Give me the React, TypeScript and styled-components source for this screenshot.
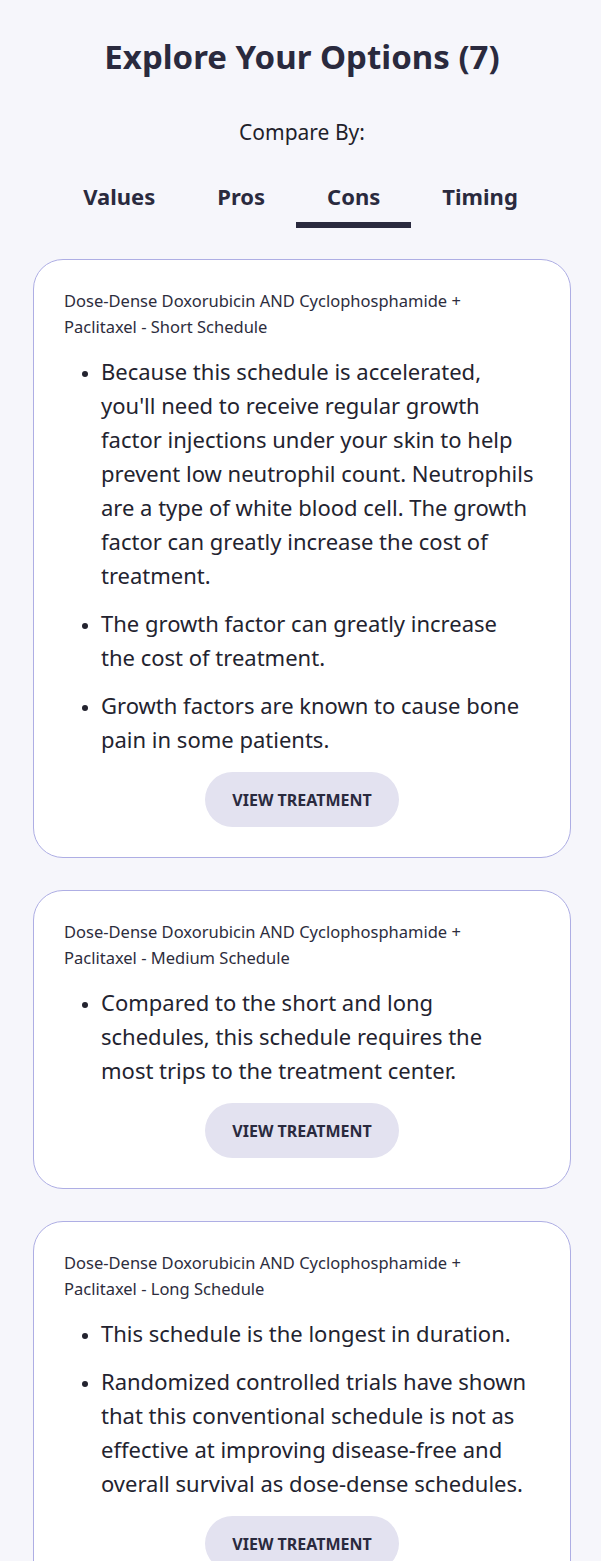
import React, { useState } from 'react'
import styled, { createGlobalStyle } from 'styled-components'

const GlobalStyle = createGlobalStyle`
  html, body {
    margin: 0;
    padding: 0;
    background: #f6f6fb;
  }
  body {
    font-family: "Noto Sans", "Open Sans", sans-serif;
    color: #26263a;
  }
`

type Option = {
  name: string
  cons: string[]
}

const options: Option[] = [
  {
    name: 'Dose-Dense Doxorubicin AND Cyclophosphamide + Paclitaxel - Short Schedule',
    cons: [
      "Because this schedule is accelerated, you'll need to receive regular growth factor injections under your skin to help prevent low neutrophil count. Neutrophils are a type of white blood cell. The growth factor can greatly increase the cost of treatment.",
      'The growth factor can greatly increase the cost of treatment.',
      'Growth factors are known to cause bone pain in some patients.',
    ],
  },
  {
    name: 'Dose-Dense Doxorubicin AND Cyclophosphamide + Paclitaxel - Medium Schedule',
    cons: [
      'Compared to the short and long schedules, this schedule requires the most trips to the treatment center.',
    ],
  },
  {
    name: 'Dose-Dense Doxorubicin AND Cyclophosphamide + Paclitaxel - Long Schedule',
    cons: [
      'This schedule is the longest in duration.',
      'Randomized controlled trials have shown that this conventional schedule is not as effective at improving disease-free and overall survival as dose-dense schedules.',
    ],
  },
]

const tabs = ['Values', 'Pros', 'Cons', 'Timing']

export default function App() {
  const [active, setActive] = useState('Cons')
  return (
    <Page>
      <GlobalStyle />
      <Heading>Explore Your Options (7)</Heading>
      <CompareLabel>Compare By:</CompareLabel>
      <TabBar>
        {tabs.map((t) => (
          <Tab key={t} $active={t === active} onClick={() => setActive(t)}>
            {t}
          </Tab>
        ))}
      </TabBar>
      <CardList>
        {options.map((o) => (
          <Card key={o.name}>
            <CardTitle>{o.name}</CardTitle>
            <BulletList>
              {o.cons.map((c) => (
                <li key={c}>{c}</li>
              ))}
            </BulletList>
            <ButtonRow>
              <ViewButton>View Treatment</ViewButton>
            </ButtonRow>
          </Card>
        ))}
      </CardList>
    </Page>
  )
}

const Page = styled.div`
  width: 601px;
  box-sizing: border-box;
  padding: 34px 30px 40px 33px;
  background: #f6f6fb;
`

const Heading = styled.h1`
  margin: 0;
  text-align: center;
  font-size: 33px;
  line-height: 46px;
  font-weight: 700;
  color: #2a2a3e;
`

const CompareLabel = styled.div`
  margin-top: 37px;
  text-align: center;
  font-size: 21px;
  line-height: 30px;
  color: #1f1f2b;
`

const TabBar = styled.div`
  display: flex;
  justify-content: center;
  margin-top: 34px;
  padding-right: 3px;
`

const Tab = styled.button<{ $active: boolean }>`
  background: none;
  border: none;
  padding: 0 31px 11px 31px;
  font-family: inherit;
  font-size: 22px;
  line-height: 30px;
  font-weight: 700;
  color: #2a2a3e;
  cursor: pointer;
  border-bottom: 6px solid ${(p) => (p.$active ? '#2a2a3e' : 'transparent')};
`

const CardList = styled.div`
  display: flex;
  flex-direction: column;
  gap: 32px;
  margin-top: 31px;
`

const Card = styled.div`
  background: #fff;
  border: 1px solid #aeaee4;
  border-radius: 30px;
  padding: 28px 30px 30px 30px;
`

const CardTitle = styled.div`
  font-size: 16.5px;
  line-height: 26px;
  color: #2d2d3d;
  padding-right: 40px;
`

const BulletList = styled.ul`
  margin: 14px 0 0 0;
  padding: 0 5px 0 37px;
  font-size: 22px;
  line-height: 34px;
  color: #23232f;
  li {
    margin-bottom: 14px;
  }
  li::marker {
    font-size: 17px;
  }
  li:last-child {
    margin-bottom: 0;
  }
`

const ButtonRow = styled.div`
  display: flex;
  justify-content: center;
  margin-top: 16px;
`

const ViewButton = styled.button`
  width: 194px;
  height: 55px;
  border: none;
  border-radius: 28px;
  background: #e3e2f0;
  color: #2a2a3e;
  font-family: inherit;
  font-size: 16px;
  font-weight: 700;
  text-transform: uppercase;
  cursor: pointer;
`
